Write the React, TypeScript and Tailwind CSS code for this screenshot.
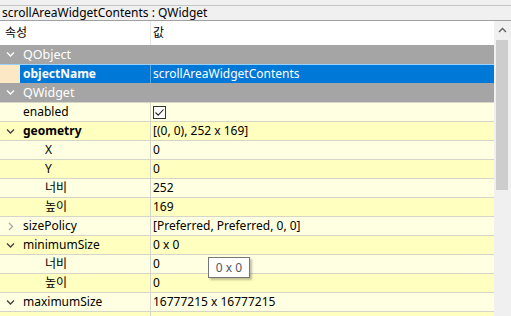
import React from 'react';

type Row = {
    name: string;
    value?: string;
    depth: number;
    bold?: boolean;
    arrow?: 'down' | 'right';
    shade: 'light' | 'dark';
    check?: boolean;
};

const rows: Row[] = [
    { name: 'enabled', depth: 1, shade: 'light', check: true },
    { name: 'geometry', value: '[(0, 0), 252 x 169]', depth: 1, bold: true, arrow: 'down', shade: 'dark' },
    { name: 'X', value: '0', depth: 2, shade: 'light' },
    { name: 'Y', value: '0', depth: 2, shade: 'dark' },
    { name: '너비', value: '252', depth: 2, shade: 'light' },
    { name: '높이', value: '169', depth: 2, shade: 'dark' },
    { name: 'sizePolicy', value: '[Preferred, Preferred, 0, 0]', depth: 1, arrow: 'right', shade: 'light' },
    { name: 'minimumSize', value: '0 x 0', depth: 1, arrow: 'down', shade: 'dark' },
    { name: '너비', value: '0', depth: 2, shade: 'light' },
    { name: '높이', value: '0', depth: 2, shade: 'dark' },
    { name: 'maximumSize', value: '16777215 x 16777215', depth: 1, arrow: 'down', shade: 'light' },
    { name: '', value: '', depth: 1, shade: 'dark' },
];

function Chevron({ dir, color }: { dir: 'down' | 'right' | 'up'; color: string }) {
    const d = dir === 'down' ? 'M1 2.5 L4.5 6 L8 2.5' : dir === 'up' ? 'M1 6 L4.5 2.5 L8 6' : 'M3 1 L6.5 4.5 L3 8';
    return (
        <svg width="9" height="9" viewBox="0 0 9 9" className="shrink-0">
            <path d={d} fill="none" stroke={color} strokeWidth="1.3" />
        </svg>
    );
}

function GroupRow({ label }: { label: string }) {
    return (
        <div className="h-[19px] shrink-0 flex items-center bg-[#a5a5a5] text-white text-[12.5px]">
            <div className="w-[20px] flex justify-center pl-[1px]">
                <Chevron dir="down" color="#ffffff" />
            </div>
            <span className="pl-[3px] pt-[1px]">{label}</span>
        </div>
    );
}

export default function App() {
    return (
        <div
            className="w-[511px] h-[316px] bg-[#f0f0f0] flex flex-col overflow-hidden relative text-[12px] text-black"
            style={{ fontFamily: '"Noto Sans", "Noto Sans CJK KR", sans-serif' }}
        >
            {/* Title */}
            <div className="h-[5px] shrink-0" />
            <div className="h-[15px] shrink-0 border-t border-[#c4c4c4] flex items-center pl-[2px] leading-none text-[12px]">
                scrollAreaWidgetContents : QWidget
            </div>

            <div className="flex flex-1 border-t border-[#a0a0a0] min-h-0">
                <div className="flex-1 flex flex-col bg-white overflow-hidden">
                    {/* Header */}
                    <div className="h-[24px] flex items-center shrink-0">
                        <div className="w-[151px] h-full flex items-center pl-[5px] border-r border-[#e5e5e5]">속성</div>
                        <div className="pl-[2px]">값</div>
                    </div>

                    <GroupRow label="QObject" />

                    {/* Selected row */}
                    <div className="h-[19px] shrink-0 flex border-t border-[#99d1ff]">
                        <div className="w-[20px] bg-[#fde8c6]" />
                        <div className="flex-1 flex items-center bg-[#0078d7] text-white">
                            <div className="w-[131px] h-full flex items-center pl-[3px] font-bold border-r border-[#5aa7e6]">
                                objectName
                            </div>
                            <div className="pl-[2px]">scrollAreaWidgetContents</div>
                        </div>
                    </div>

                    <GroupRow label="QWidget" />

                    {rows.map((r, i) => (
                        <div
                            key={i}
                            className={`h-[19px] shrink-0 flex items-center border-t border-[#d6d6c8] ${
                                r.shade === 'light' ? 'bg-[#ffffe1]' : 'bg-[#ffffbf]'
                            }`}
                        >
                            <div className="w-[151px] h-full flex items-center border-r border-[#d6d6c8]">
                                <div className="w-[20px] flex justify-center pl-[1px]">
                                    {r.arrow === 'down' && <Chevron dir="down" color="#404040" />}
                                    {r.arrow === 'right' && <Chevron dir="right" color="#a8a8a8" />}
                                </div>
                                <span className={`${r.depth === 2 ? 'pl-[25px]' : 'pl-[3px]'} ${r.bold ? 'font-bold' : ''}`}>
                                    {r.name}
                                </span>
                            </div>
                            <div className="pl-[2px] flex items-center">
                                {r.check ? (
                                    <div className="w-[13px] h-[13px] border border-[#333333] bg-white flex items-center justify-center">
                                        <svg width="11" height="11" viewBox="0 0 11 11">
                                            <path d="M1.5 5.5 L4.2 8.2 L9.5 2.5" fill="none" stroke="#222222" strokeWidth="1.1" />
                                        </svg>
                                    </div>
                                ) : (
                                    <span>{r.value}</span>
                                )}
                            </div>
                        </div>
                    ))}
                </div>

                {/* Scrollbar */}
                <div className="w-[17px] shrink-0 bg-[#f0f0f0] flex flex-col">
                    <div className="h-[19px] flex items-center justify-center">
                        <Chevron dir="up" color="#606060" />
                    </div>
                    <div className="h-[150px] ml-[2px] w-[12px] bg-[#cdcdcd]" />
                </div>
            </div>

            {/* Tooltip */}
            <div className="absolute left-[208px] top-[257px] w-[42px] h-[21px] bg-white border border-[#767676] flex items-center justify-center text-[#575757] shadow-[2px_2px_2px_rgba(0,0,0,0.25)]">
                0 x 0
            </div>
        </div>
    );
}
